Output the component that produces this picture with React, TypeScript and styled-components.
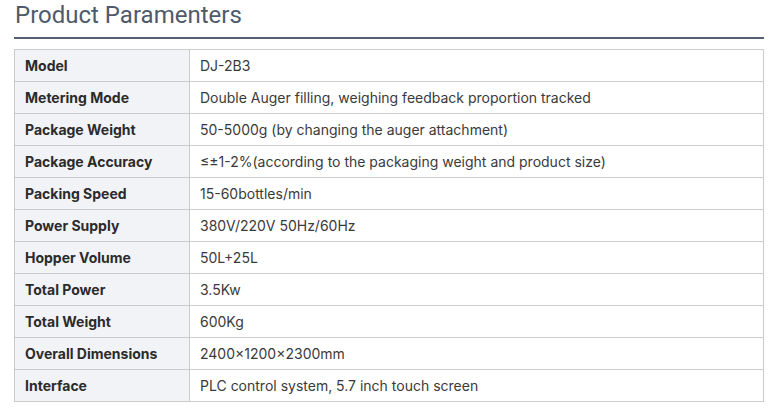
import React from 'react';
import styled, { createGlobalStyle } from 'styled-components';

interface Param {
  label: string;
  value: string;
}

const params: Param[] = [
  { label: 'Model', value: 'DJ-2B3' },
  { label: 'Metering Mode', value: 'Double Auger filling, weighing feedback proportion tracked' },
  { label: 'Package Weight', value: '50-5000g (by changing the auger attachment)' },
  { label: 'Package Accuracy', value: '≤±1-2%(according to the packaging weight and product size)' },
  { label: 'Packing Speed', value: '15-60bottles/min' },
  { label: 'Power Supply', value: '380V/220V 50Hz/60Hz' },
  { label: 'Hopper Volume', value: '50L+25L' },
  { label: 'Total Power', value: '3.5Kw' },
  { label: 'Total Weight', value: '600Kg' },
  { label: 'Overall Dimensions', value: '2400×1200×2300mm' },
  { label: 'Interface', value: 'PLC control system, 5.7 inch touch screen' },
];

const GlobalStyle = createGlobalStyle`
  body {
    margin: 0;
    background: #fff;
    font-family: Inter, "Noto Sans", sans-serif;
  }
`;

const Section = styled.section`
  width: 750px;
  margin-left: 14px;
`;

const Titulo = styled.h2`
  margin: 0;
  padding: 0 0 0 1px;
  height: 37px;
  font-family: Roboto, "Noto Sans", sans-serif;
  font-weight: 400;
  font-size: 24px;
  line-height: 30px;
  color: #4e5a6c;
  border-bottom: 2px solid #535f72;
`;

const Tabla = styled.table`
  margin-top: 10px;
  width: 750px;
  border-collapse: collapse;
  font-size: 14px;
  color: #333;
`;

const Celda = styled.td<{ $head?: boolean }>`
  height: 32px;
  padding: 0 10px;
  border: 1px solid #cbcbcb;
  box-sizing: border-box;
  vertical-align: middle;
  white-space: nowrap;
  ${(p) =>
    p.$head
      ? `
    width: 175px;
    font-weight: 700;
    background: #f2f3f7;
    color: #2b2b2b;
  `
      : `
    font-weight: 400;
    color: #3a3a3a;
  `}
`;

const App = () => (
  <>
    <GlobalStyle />
    <Section>
      <Titulo>Product Paramenters</Titulo>
      <Tabla>
        <tbody>
          {params.map((p) => (
            <tr key={p.label}>
              <Celda $head>{p.label}</Celda>
              <Celda>{p.value}</Celda>
            </tr>
          ))}
        </tbody>
      </Tabla>
    </Section>
  </>
);

export default App;
